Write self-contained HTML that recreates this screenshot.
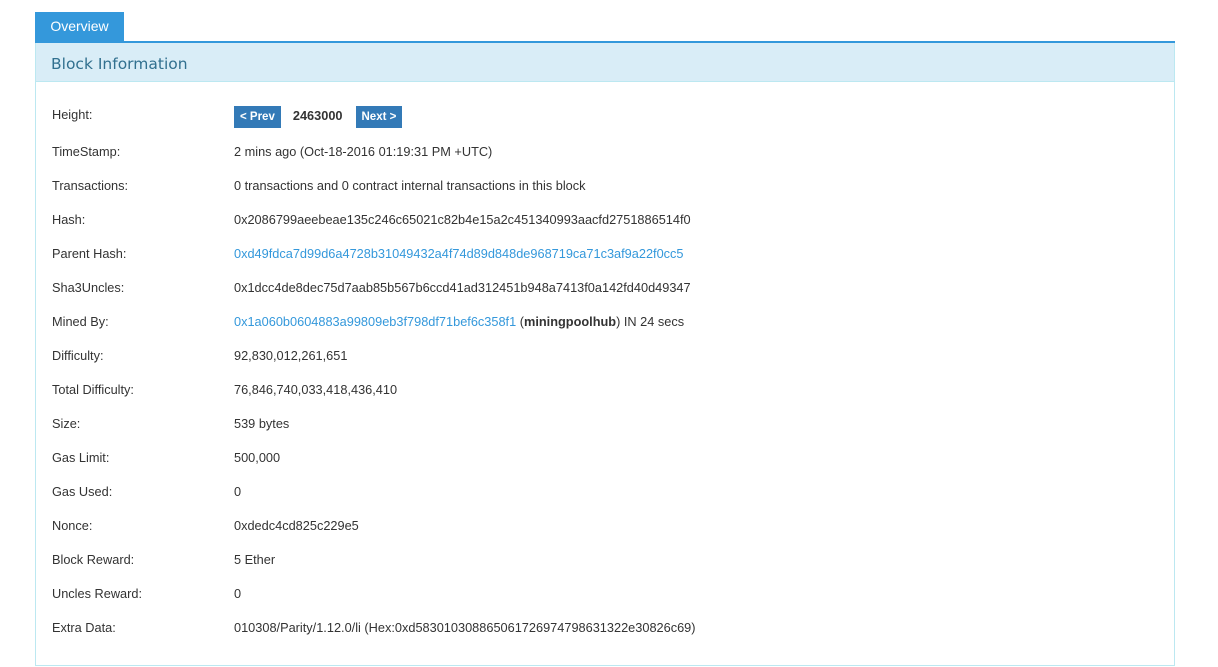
<!DOCTYPE html>
<html><head><style>
body{margin:0;background:#fff;font-family:"Liberation Sans",Arial,sans-serif;font-size:12.75px;color:#333;}
.tab{position:absolute;left:35px;top:12px;width:89px;height:30px;background:#3498db;color:#fff;font-size:14px;line-height:29px;text-align:center;}
.line{position:absolute;left:35px;top:41px;width:1140px;height:2px;background:#3498db;}
.panel{position:absolute;left:35px;top:43px;width:1138px;height:622px;border:1px solid #bce8f1;border-top:none;}
.head{height:38px;background:#d9edf7;border-bottom:1px solid #bce8f1;color:#31708f;line-height:42px;padding-left:15px;font-family:"DejaVu Sans","Liberation Sans",sans-serif;font-size:15.5px;}
.row{position:absolute;left:16px;height:20px;line-height:20px;}
.row .v{position:absolute;left:182px;white-space:nowrap;}
.row .l{white-space:nowrap;}
a{color:#3498db;text-decoration:none}
.btn{display:inline-block;background:#337ab7;color:#fff;font-weight:bold;font-size:11.5px;height:22px;line-height:22px;padding:0 6px;}
</style></head><body>
<div class="tab">Overview</div>
<div class="line"></div>
<div class="panel">
<div class="head">Block Information</div>
<div class="row" style="top:62px"><span class="l">Height:</span><span class="v" style="top:1px"><span class="btn">&lt; Prev</span><b style="margin:0 13px 0 12px">2463000</b><span class="btn">Next &gt;</span></span></div>
<div class="row" style="top:99px"><span class="l">TimeStamp:</span><span class="v">2 mins ago (Oct-18-2016 01:19:31 PM +UTC)</span></div>
<div class="row" style="top:133px"><span class="l">Transactions:</span><span class="v">0 transactions and 0 contract internal transactions in this block</span></div>
<div class="row" style="top:167px"><span class="l">Hash:</span><span class="v">0x2086799aeebeae135c246c65021c82b4e15a2c451340993aacfd2751886514f0</span></div>
<div class="row" style="top:201px"><span class="l">Parent Hash:</span><span class="v"><a>0xd49fdca7d99d6a4728b31049432a4f74d89d848de968719ca71c3af9a22f0cc5</a></span></div>
<div class="row" style="top:235px"><span class="l">Sha3Uncles:</span><span class="v">0x1dcc4de8dec75d7aab85b567b6ccd41ad312451b948a7413f0a142fd40d49347</span></div>
<div class="row" style="top:269px"><span class="l">Mined By:</span><span class="v"><a>0x1a060b0604883a99809eb3f798df71bef6c358f1</a> (<b>miningpoolhub</b>) IN 24 secs</span></div>
<div class="row" style="top:303px"><span class="l">Difficulty:</span><span class="v">92,830,012,261,651</span></div>
<div class="row" style="top:337px"><span class="l">Total Difficulty:</span><span class="v">76,846,740,033,418,436,410</span></div>
<div class="row" style="top:371px"><span class="l">Size:</span><span class="v">539 bytes</span></div>
<div class="row" style="top:405px"><span class="l">Gas Limit:</span><span class="v">500,000</span></div>
<div class="row" style="top:439px"><span class="l">Gas Used:</span><span class="v">0</span></div>
<div class="row" style="top:473px"><span class="l">Nonce:</span><span class="v">0xdedc4cd825c229e5</span></div>
<div class="row" style="top:507px"><span class="l">Block Reward:</span><span class="v">5 Ether</span></div>
<div class="row" style="top:541px"><span class="l">Uncles Reward:</span><span class="v">0</span></div>
<div class="row" style="top:575px"><span class="l">Extra Data:</span><span class="v">010308/Parity/1.12.0/li (Hex:0xd583010308865061726974798631322e30826c69)</span></div>
</div>
</body></html>
